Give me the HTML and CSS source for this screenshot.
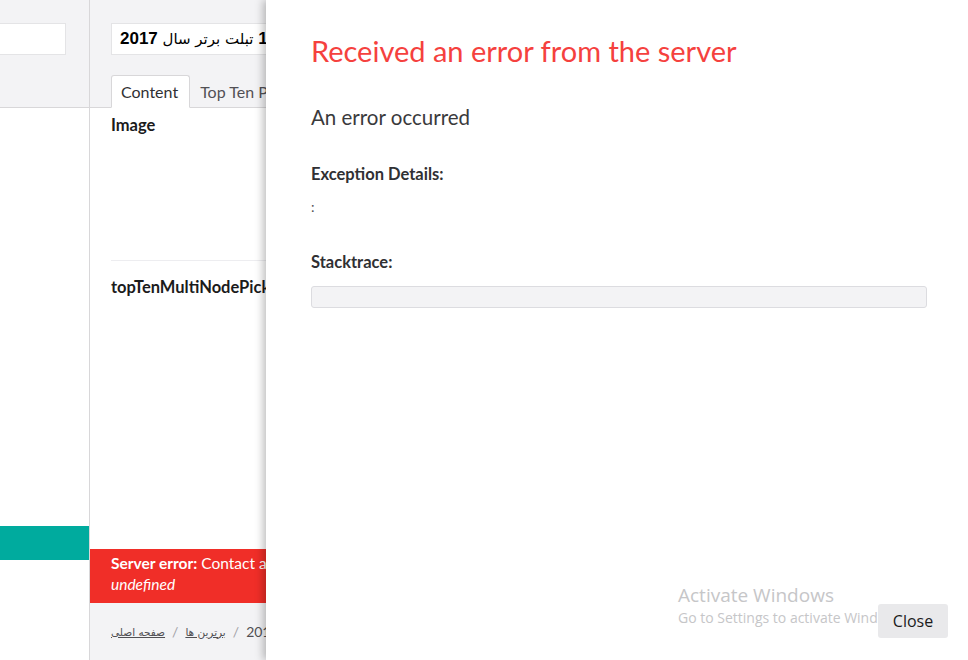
FILE: index.html
```html
<!DOCTYPE html>
<html lang="en">

<head>
    <meta charset="UTF-8">
    <meta name="viewport" content="width=device-width, initial-scale=1.0">
    <title>Edit content</title>
    <link rel="stylesheet" href="styles.css">
</head>

<body>
    <div class="app">
        <div class="tree">
            <div class="tree-header">
                <input type="text" class="tree-search" value="">
            </div>
            <div class="tree-body">
                <div class="tree-selected"></div>
            </div>
        </div>

        <div class="editor">
            <div class="editor-header">
                <div class="name-input"><span class="fa">لیست</span> 10 <span class="fa">تبلت</span> <span class="fa">برتر</span> <span class="fa">سال</span> 2017</div>
                <div class="tabs">
                    <span class="tab active">Content</span>
                    <span class="tab">Top Ten Products</span>
                </div>
            </div>

            <div class="editor-body">
                <div class="property">
                    <div class="property-label">Image</div>
                </div>
                <div class="property">
                    <div class="property-label">topTenMultiNodePicker</div>
                </div>
            </div>

            <div class="server-error">
                <div><strong>Server error:</strong> Contact administrator, see log for full details.</div>
                <div><em>undefined</em></div>
            </div>

            <div class="editor-footer">
                <a href="#" class="crumb">صفحه اصلی</a>
                <span class="sep">/</span>
                <a href="#" class="crumb">برترین ها</a>
                <span class="sep">/</span>
                <span class="crumb-current">2017</span>
            </div>
        </div>

        <div class="overlay">
            <h1 class="overlay-title">Received an error from the server</h1>
            <p class="overlay-subtitle">An error occurred</p>

            <h5 class="detail-label">Exception Details:</h5>
            <p class="detail-value">:</p>

            <h5 class="detail-label stack-label">Stacktrace:</h5>
            <pre class="stacktrace"></pre>

            <button type="button" class="close-btn">Close</button>
        </div>

        <div class="activate">
            <div class="activate-title">Activate Windows</div>
            <div class="activate-text">Go to Settings to activate Windows.</div>
        </div>
    </div>
</body>

</html>
```

FILE: styles.css
```css
body {
    margin: 0;
    font-family: Lato, "Open Sans", sans-serif;
    color: #1b264f;
    background-color: #fff;
    overflow: hidden;
}

.app {
    position: relative;
    display: flex;
    height: 660px;
    overflow: hidden;
}

/* tree */
.tree {
    width: 89px;
    flex-shrink: 0;
    border-right: 1px solid #d8d7d9;
    display: flex;
    flex-direction: column;
}

.tree-header {
    height: 108px;
    box-sizing: border-box;
    padding-top: 23px;
    background-color: #f3f3f5;
    border-bottom: 1px solid #d8d7d9;
}

.tree-search {
    display: block;
    box-sizing: border-box;
    width: 77px;
    height: 32px;
    margin-left: -11px;
    border: 1px solid #e4e4e6;
    background-color: #fff;
}

.tree-body {
    flex: 1;
    padding-top: 418px;
}

.tree-selected {
    height: 34px;
    background-color: #00ab9e;
}

/* editor */
.editor {
    flex: 1;
    display: flex;
    flex-direction: column;
    min-width: 0;
}

.editor-header {
    height: 108px;
    box-sizing: border-box;
    padding: 23px 0 0 21px;
    background-color: #f3f3f5;
    border-bottom: 1px solid #d8d7d9;
    display: flex;
    flex-direction: column;
}

.name-input {
    box-sizing: border-box;
    width: 400px;
    height: 32px;
    padding: 0 8px;
    border: 1px solid #e4e4e6;
    background-color: #fff;
    font-family: "Liberation Sans", "DejaVu Sans", sans-serif;
    font-size: 17px;
    font-weight: bold;
    line-height: 30px;
    color: #000;
    white-space: nowrap;
    overflow: hidden;
}

.name-input .fa {
    font-family: "DejaVu Sans", sans-serif;
    font-size: 15px;
    font-weight: normal;
}

.tabs {
    display: flex;
    margin-top: 20px;
    margin-bottom: -1px;
}

.tab {
    height: 33px;
    box-sizing: border-box;
    padding: 0 11px 0 9px;
    line-height: 32px;
    font-size: 16px;
    color: #515054;
    border: 1px solid transparent;
    white-space: nowrap;
}

.tab.active {
    background-color: #fff;
    color: #303033;
    border-color: #d8d7d9;
    border-bottom-color: #fff;
    border-radius: 3px 3px 0 0;
}

.editor-body {
    flex: 1;
    padding: 6px 0 0 21px;
}

.property {
    height: 147px;
    border-bottom: 1px solid #ededf0;
    box-sizing: border-box;
}

.property + .property {
    padding-top: 15px;
    border-bottom: none;
}

.property-label {
    font-size: 16.5px;
    font-weight: bold;
    line-height: 22px;
    color: #1b1b1b;
    white-space: nowrap;
}

.server-error {
    height: 54px;
    box-sizing: border-box;
    padding: 4px 0 0 21px;
    background-color: #f02e28;
    color: #fff;
    font-size: 15.5px;
    line-height: 21px;
    white-space: nowrap;
}

.editor-footer {
    height: 57px;
    box-sizing: border-box;
    padding: 0 0 0 21px;
    background-color: #f3f3f5;
    display: flex;
    align-items: center;
    gap: 7px;
    font-size: 14px;
    color: #515054;
}

.crumb {
    font-family: "DejaVu Sans", sans-serif;
    font-size: 10.5px;
    color: #515054;
}

.sep {
    color: #a2a1a6;
}

/* error overlay */
.overlay {
    position: absolute;
    top: 0;
    bottom: 0;
    left: 266px;
    right: 0;
    padding: 0 41px 0 45px;
    background-color: #fff;
    box-shadow: -3px 0 8px rgba(0, 0, 0, 0.25);
}

.overlay-title {
    margin: 32px 0 0;
    font-size: 29px;
    font-weight: normal;
    line-height: 38px;
    color: #f5413e;
}

.overlay-subtitle {
    margin: 34px 0 0;
    font-size: 20.5px;
    line-height: 26px;
    color: #3a3a3c;
}

.detail-label {
    margin: 33px 0 0;
    font-size: 16.5px;
    font-weight: bold;
    line-height: 22px;
    color: #303033;
}

.detail-value {
    margin: 12px 0 0;
    font-size: 14px;
    line-height: 20px;
    color: #515054;
}

.stack-label {
    margin-top: 34px;
}

.stacktrace {
    margin: 13px 0 0;
    height: 22px;
    box-sizing: border-box;
    background-color: #f3f3f5;
    border: 1px solid #dcdce0;
    border-radius: 3px;
}

.close-btn {
    position: absolute;
    right: 20px;
    bottom: 22px;
    width: 70px;
    height: 34px;
    padding: 0;
    border: none;
    border-radius: 3px;
    background-color: #e9e9eb;
    font-family: "Open Sans", sans-serif;
    font-size: 16px;
    color: #1b1b1b;
    cursor: pointer;
    z-index: 2;
}

.activate {
    position: absolute;
    left: 678px;
    top: 583px;
    font-family: "Open Sans", sans-serif;
    color: #c6c6c8;
    pointer-events: none;
    z-index: 1;
}

.activate-title {
    font-size: 19px;
    line-height: 24px;
}

.activate-text {
    font-size: 14px;
    line-height: 22px;
    white-space: nowrap;
}
```
